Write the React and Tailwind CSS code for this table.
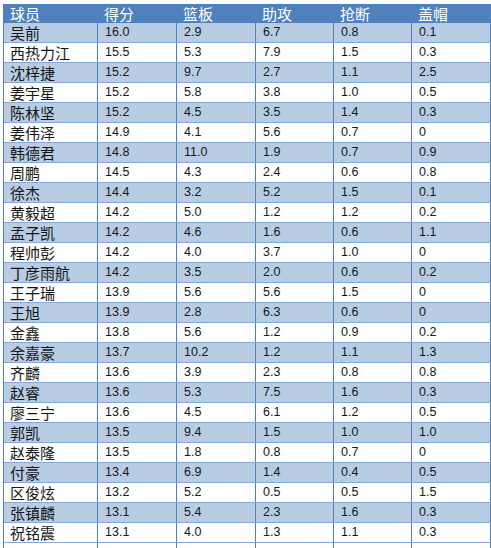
import React from "react";

const rows = [
  ["吴前", "16.0", "2.9", "6.7", "0.8", "0.1"],
  ["西热力江", "15.5", "5.3", "7.9", "1.5", "0.3"],
  ["沈梓捷", "15.2", "9.7", "2.7", "1.1", "2.5"],
  ["姜宇星", "15.2", "5.8", "3.8", "1.0", "0.5"],
  ["陈林坚", "15.2", "4.5", "3.5", "1.4", "0.3"],
  ["姜伟泽", "14.9", "4.1", "5.6", "0.7", "0"],
  ["韩德君", "14.8", "11.0", "1.9", "0.7", "0.9"],
  ["周鹏", "14.5", "4.3", "2.4", "0.6", "0.8"],
  ["徐杰", "14.4", "3.2", "5.2", "1.5", "0.1"],
  ["黄毅超", "14.2", "5.0", "1.2", "1.2", "0.2"],
  ["孟子凯", "14.2", "4.6", "1.6", "0.6", "1.1"],
  ["程帅彭", "14.2", "4.0", "3.7", "1.0", "0"],
  ["丁彦雨航", "14.2", "3.5", "2.0", "0.6", "0.2"],
  ["王子瑞", "13.9", "5.6", "5.6", "1.5", "0"],
  ["王旭", "13.9", "2.8", "6.3", "0.6", "0"],
  ["金鑫", "13.8", "5.6", "1.2", "0.9", "0.2"],
  ["余嘉豪", "13.7", "10.2", "1.2", "1.1", "1.3"],
  ["齐麟", "13.6", "3.9", "2.3", "0.8", "0.8"],
  ["赵睿", "13.6", "5.3", "7.5", "1.6", "0.3"],
  ["廖三宁", "13.6", "4.5", "6.1", "1.2", "0.5"],
  ["郭凯", "13.5", "9.4", "1.5", "1.0", "1.0"],
  ["赵泰隆", "13.5", "1.8", "0.8", "0.7", "0"],
  ["付豪", "13.4", "6.9", "1.4", "0.4", "0.5"],
  ["区俊炫", "13.2", "5.2", "0.5", "0.5", "1.5"],
  ["张镇麟", "13.1", "5.4", "2.3", "1.6", "0.3"],
  ["祝铭震", "13.1", "4.0", "1.3", "1.1", "0.3"],
];

const headers = ["球员", "得分", "篮板", "助攻", "抢断", "盖帽"];
const grid = "grid grid-cols-[94px_79px_79px_78px_78px_79px]";
const cjk = "font-['Noto_Sans_CJK_SC','Noto_Sans',sans-serif]";
const num = "font-['Liberation_Sans','Noto_Sans_CJK_SC',sans-serif]";

export default function App() {
  return (
    <div className="h-[548px] w-[491px] overflow-hidden bg-white pt-[4px] pl-[3px]">
      <div className="w-[488px] border-l border-[#4f7fbc]">
        <div className={`${grid} h-[19px] bg-[#4f81bd] text-white`}>
          {headers.map((h) => (
            <div
              key={h}
              className={`${cjk} flex items-center pl-[6px] text-[15px] leading-none`}
            >
              {h}
            </div>
          ))}
        </div>
        {rows.map((r, ri) => (
          <div
            key={r[0]}
            className={`${grid} h-[20px] border-b border-[#86a8d4] ${
              ri % 2 === 0 ? "bg-[#b8cce4]" : "bg-white"
            } text-[#161616]`}
          >
            {r.map((c, ci) => (
              <div
                key={ci}
                className={`flex items-center border-r border-[#4f7fbc] leading-none ${
                  ci === 0
                    ? `${cjk} pl-[6px] text-[15px]`
                    : `${num} pl-[7px] text-[12.5px]`
                }`}
              >
                {c}
              </div>
            ))}
          </div>
        ))}
        <div className={`${grid} h-[20px] bg-white`}>
          {headers.map((h) => (
            <div key={h} className="border-r border-[#4f7fbc]" />
          ))}
        </div>
      </div>
    </div>
  );
}
